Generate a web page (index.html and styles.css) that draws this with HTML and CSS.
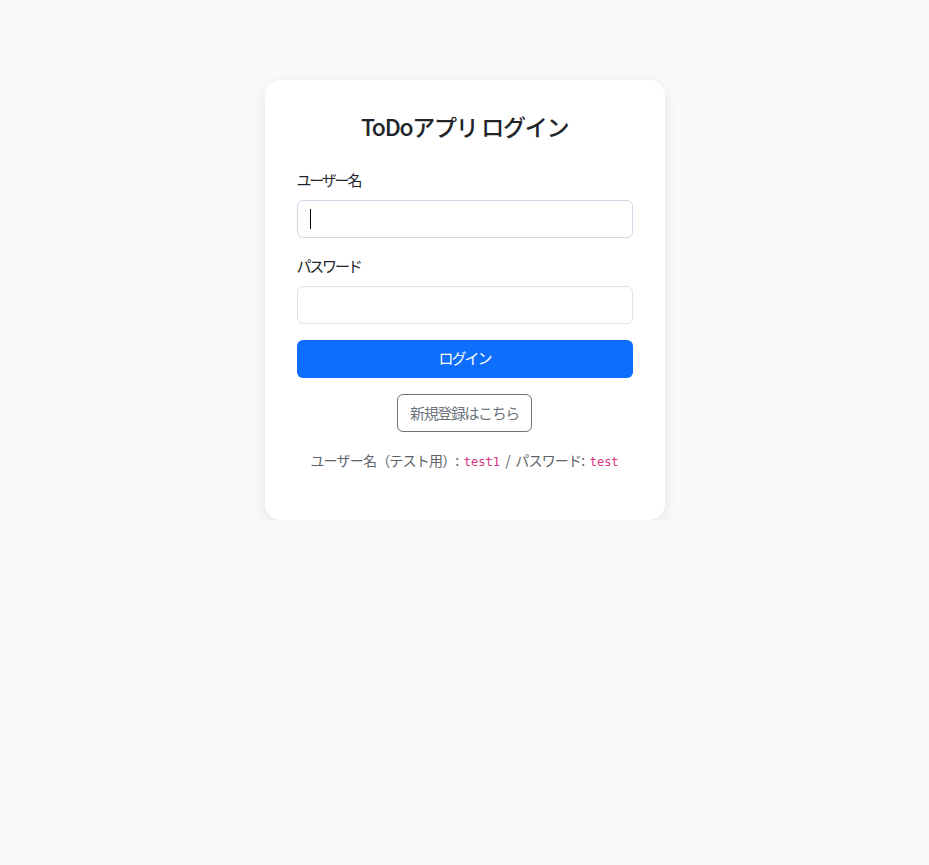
FILE: index.html
```html
<!DOCTYPE html>
<html lang="ja">
<head>
<meta charset="utf-8">
<title>ToDoアプリ ログイン</title>
<link rel="stylesheet" href="styles.css">
</head>
<body>
<main class="page">
  <div class="card">
    <h1 class="title">ToDoアプリ ログイン</h1>
    <form class="form">
      <div class="field">
        <label class="label" for="username">ユーザー名</label>
        <div class="input-wrap">
          <input class="input input-focus" id="username" type="text">
          <span class="caret"></span>
        </div>
      </div>
      <div class="field">
        <label class="label" for="password">パスワード</label>
        <input class="input" id="password" type="password">
      </div>
      <button class="btn-primary" type="button">ログイン</button>
    </form>
    <div class="register">
      <a class="btn-outline" href="#">新規登録はこちら</a>
    </div>
    <p class="hint">ユーザー名（テスト用）: <code>test1</code> / パスワード: <code>test</code></p>
  </div>
</main>
</body>
</html>
```

FILE: styles.css
```css
* { box-sizing: border-box; }
html, body {
  margin: 0;
  padding: 0;
  background: #f8f9fa;
}
body {
  font-family: "Noto Sans CJK JP", "Noto Sans", sans-serif;
  color: #212529;
  font-size: 15px;
}
.page {
  display: flex;
  justify-content: center;
  padding-top: 80px;
}
.card {
  width: 400px;
  background: #fff;
  border-radius: 16px;
  box-shadow: 0 5px 15px rgba(0, 0, 0, 0.08);
  padding: 32px 32px 31px;
}
.title {
  margin: 0 0 27px;
  text-align: center;
  font-size: 23px;
  font-weight: 500;
  line-height: 29px;
  letter-spacing: -1.3px;
  color: #212529;
}
.form { display: flex; flex-direction: column; }
.field { margin-bottom: 16px; }
.label {
  display: block;
  font-size: 15px;
  line-height: 24px;
  letter-spacing: -2.2px;
  margin-bottom: 8px;
  color: #212529;
}
.input-wrap { position: relative; }
.input {
  display: block;
  width: 100%;
  height: 38px;
  border: 1px solid #dee2e6;
  border-radius: 6px;
  background: #fff;
  padding: 6px 12px;
  font-size: 15px;
  outline: none;
}
.input-focus { border-color: #cfd9e6; }
.caret {
  position: absolute;
  left: 13px;
  top: 9px;
  width: 1px;
  height: 20px;
  background: #000;
}
.btn-primary {
  height: 38px;
  border: 0;
  border-radius: 6px;
  background: #0d6efd;
  color: #fff;
  font-family: inherit;
  font-size: 15px;
  line-height: 34px;
  padding: 0 0 2px;
  letter-spacing: -2px;
}
.register {
  display: flex;
  justify-content: center;
  margin-top: 16px;
}
.btn-outline {
  display: inline-block;
  height: 38px;
  line-height: 36px;
  padding: 0 12px;
  border: 1px solid #6c757d;
  border-radius: 6px;
  color: #6c757d;
  font-size: 15px;
  letter-spacing: -1.4px;
  text-decoration: none;
}
.hint {
  margin: 17px 0 16px;
  text-align: center;
  font-size: 14px;
  line-height: 22px;
  letter-spacing: -0.8px;
  word-spacing: 3px;
  color: #5c636a;
}
.hint code {
  font-family: "DejaVu Sans Mono", "Liberation Mono", monospace;
  font-size: 12px;
  letter-spacing: 0;
  color: #d63384;
}
```
